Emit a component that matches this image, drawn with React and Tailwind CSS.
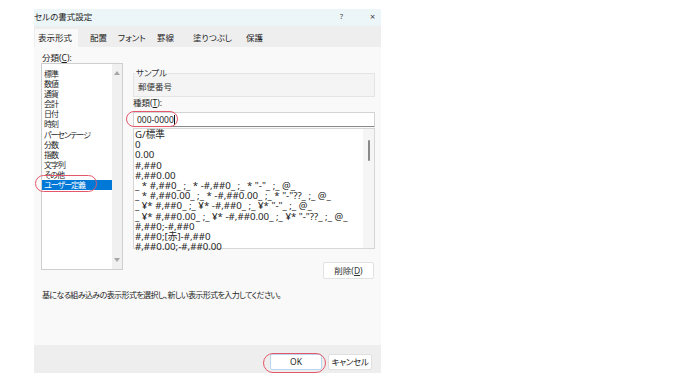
import React from "react";

const categories = ["標準", "数値", "通貨", "会計", "日付", "時刻", "パーセンテージ", "分数", "指数", "文字列", "その他", "ユーザー定義"];

const formats = [
  "G/標準",
  "0",
  "0.00",
  "#,##0",
  "#,##0.00",
  '_ * #,##0_ ;_ * -#,##0_ ;_ * "-"_ ;_ @_',
  '_ * #,##0.00_ ;_ * -#,##0.00_ ;_ * "-"??_ ;_ @_',
  '_ ¥* #,##0_ ;_ ¥* -#,##0_ ;_ ¥* "-"_ ;_ @_',
  '_ ¥* #,##0.00_ ;_ ¥* -#,##0.00_ ;_ ¥* "-"??_ ;_ @_',
  "#,##0;-#,##0",
  "#,##0;[赤]-#,##0",
  "#,##0.00;-#,##0.00",
];

const tabs = [
  { label: "表示形式", w: "w-[43px]", pl: "pl-[3px]", active: true },
  { label: "配置", w: "w-[34px]", pl: "pl-[12px]" },
  { label: "フォント", w: "w-[38px]", pl: "pl-[6px]" },
  { label: "罫線", w: "w-[35px]", pl: "pl-[7px]" },
  { label: "塗りつぶし", w: "w-[47px]", pl: "pl-[8px]" },
  { label: "保護", w: "w-[30px]", pl: "pl-[14px]" },
];

const Tri = ({ down }) => (
  <svg width="6" height="4" viewBox="0 0 6 4">
    <path d={down ? "M0 0h6L3 4z" : "M0 4h6L3 0z"} fill="#a6a6a6" />
  </svg>
);

const Ring = ({ className }) => (
  <div className={`absolute rounded-full border border-[#e4576a] ${className}`} />
);

export default function App() {
  return (
    <div className="w-[700px] h-[392px] bg-white pl-[34px] pt-[9px] font-['Noto_Sans','Noto_Sans_CJK_JP',sans-serif] [font-feature-settings:'palt'] text-[8.5px] text-[#1e1e1e]">
      <div className="w-[347px] h-[364px] flex flex-col">
        {/* title bar */}
        <div className="h-[17px] bg-[#ecf5f7] flex items-center justify-between pb-[1px]">
          <span className="leading-[10px]">セルの書式設定</span>
          <div className="flex items-center leading-[10px] text-[#444]">
            <span className="w-[30px] text-[7px]">?</span>
            <span className="w-[11px] text-[9px]">×</span>
          </div>
        </div>

        {/* tabs */}
        <div className="h-[21px] bg-[#eeeeee] flex items-end pl-[1px]">
          {tabs.map((t) => (
            <div key={t.label} className={`shrink-0 whitespace-nowrap h-[18px] flex items-center leading-[10px] ${t.w} ${t.pl} ${t.active ? "bg-[#f9f9f9]" : ""}`}>
              {t.label}
            </div>
          ))}
        </div>

        {/* body */}
        <div className="relative h-[298px] bg-[#f9f9f9] pt-[6px]">
          <div className="flex">
            {/* category column */}
            <div className="ml-[7px] w-[82px] flex flex-col">
              <div className="h-[10px] leading-[10px] pl-[1px]">
                分類(<span className="underline">C</span>):
              </div>
              <div className="h-[207px] bg-white border border-[#cfcfcf] flex">
                <div className="flex-1 pt-[5px] text-[8px] tracking-[-1px]">
                  {categories.map((c, i) => (
                    <div
                      key={c}
                      className={`h-[10.1px] leading-[10.1px] pl-[2px] whitespace-nowrap ${i === categories.length - 1 ? "bg-[#0078d7] text-white" : ""}`}
                    >
                      {c}
                    </div>
                  ))}
                </div>
                <div className="w-[10px] bg-[#f0f0f0] flex flex-col items-center justify-between py-[7px]">
                  <Tri />
                  <Tri down />
                </div>
              </div>
            </div>

            {/* right column */}
            <div className="ml-[10px] w-[242px] flex flex-col">
              <fieldset className="mt-[15px] border border-[#e4e4e4] bg-[#f4f4f4] px-[4px] pb-[4px]">
                <legend className="-ml-[3px] px-[1px] leading-[10px] text-[#333]">サンプル</legend>
                <div className="pt-[4px] leading-[10px] text-[#333]">郵便番号</div>
              </fieldset>
              <div className="mt-[1px] h-[10px] leading-[10px]">
                種類(<span className="underline">T</span>):
              </div>
              <div className="mt-[4px] h-[15px] bg-white border border-[#d3d3d3] border-b-[#8a8a8a] flex items-center pl-[3px]">
                <span className="leading-[10px]">000-0000</span>
                <span className="w-px h-[10px] bg-[#111]" />
              </div>
              <div className="mt-[1px] h-[121px] bg-white border border-[#d6d6d6] flex">
                <div className="flex-1 pt-[1px] pl-[1px] whitespace-pre text-[9.7px]">
                  {formats.map((f) => (
                    <div key={f} className="h-[10.2px] leading-[10.2px]">
                      {f}
                    </div>
                  ))}
                </div>
                <div className="w-[11px] bg-[#f5f5f5] flex justify-center pt-[11px]">
                  <div className="w-[2px] h-[21px] rounded-full bg-[#8a8a8a]" />
                </div>
              </div>
              <button className="mt-[13px] self-end mr-[1px] w-[51px] h-[17px] bg-white border border-[#e2e2e2] rounded-[2px] leading-[10px] text-[#333]">
                削除(<span className="underline">D</span>)
              </button>
            </div>
          </div>

          <div className="mt-[11px] ml-[8px] h-[10px] leading-[10px] text-[8px] tracking-[-0.6px] whitespace-nowrap">
            基になる組み込みの表示形式を選択し、新しい表示形式を入力してください。
          </div>

          <Ring className="left-[1px] top-[128px] w-[62px] h-[17px]" />
          <Ring className="left-[92px] top-[64px] w-[52px] h-[16px]" />
        </div>

        {/* footer */}
        <div className="relative h-[28px] bg-[#eeeeee] flex justify-end items-start pt-[9px] pr-[9px] gap-[6px]">
          <button className="w-[52px] h-[16px] bg-white border border-[#b9d6f0] rounded-[2px] leading-[10px]">OK</button>
          <button className="w-[44px] h-[16px] bg-white border border-[#e0e0e0] rounded-[2px] leading-[10px] tracking-[-0.3px]">キャンセル</button>
          <Ring className="left-[229px] top-[8px] w-[63px] h-[20px]" />
        </div>
      </div>
    </div>
  );
}
